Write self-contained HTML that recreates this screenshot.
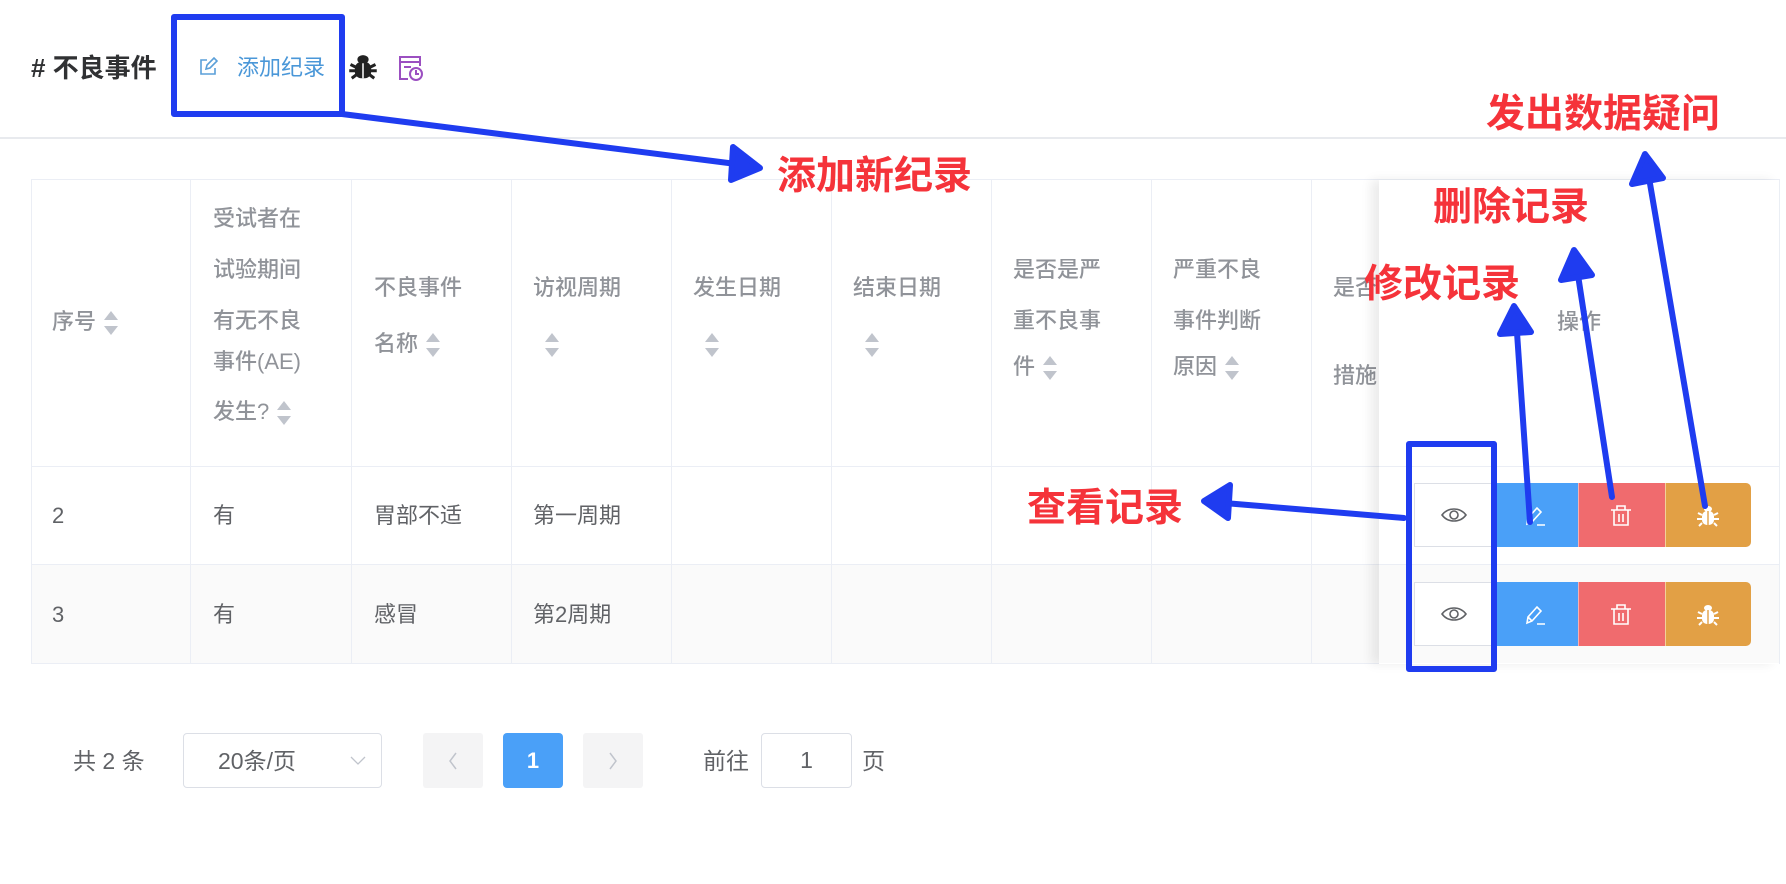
<!DOCTYPE html>
<html><head><meta charset="utf-8"><style>
*{margin:0;padding:0;box-sizing:border-box}
body{width:1786px;height:884px;background:#fff;position:relative;overflow:hidden;font-family:"Liberation Sans","Noto Sans CJK SC",sans-serif;color:#606266}
.a{position:absolute;white-space:nowrap}
.h{position:absolute;white-space:nowrap;font-size:22px;color:#909399;font-weight:500;line-height:26px;transform:translateY(-13px)}
.t{position:absolute;white-space:nowrap;font-size:22px;color:#606266;line-height:26px;transform:translateY(-13px)}
.c{display:inline-block;width:14px;height:26px;position:relative;vertical-align:middle;margin-left:8px}
.c:before{content:"";position:absolute;left:0;top:1px;border:7px solid transparent;border-bottom:9px solid #c0c4cc;border-top:0}
.c:after{content:"";position:absolute;left:0;bottom:1px;border:7px solid transparent;border-top:9px solid #c0c4cc;border-bottom:0}
.vl{position:absolute;width:1px;background:#ebeef5}
.hl{position:absolute;height:1px;background:#ebeef5}
.red{position:absolute;color:#f5333a;font-weight:bold;font-size:39px;white-space:nowrap;line-height:44px}
</style></head><body>
<div class="a" style="left:31px;top:52px;font-size:26px;font-weight:bold;color:#303133;line-height:32px"># 不良事件</div>
<svg class="a" style="left:198px;top:57px" width="20" height="20" viewBox="0 0 20 20"><path d="M9 3H3v14h14v-6M8 12l1-4 7-7 3 3-7 7z" fill="none" stroke="#5a9fd8" stroke-width="1.6"/></svg>
<div class="a" style="left:237px;top:54px;font-size:22px;color:#4a97d8;line-height:28px">添加纪录</div>
<svg class="a" style="left:348px;top:52px" width="30" height="30" viewBox="0 0 24 24"><ellipse cx="12" cy="6" rx="4.5" ry="3.5" fill="#222"/><rect x="5.5" y="8" width="13" height="13" rx="5" fill="#222"/><path d="M2 10l4 2M22 10l-4 2M1 15h5M23 15h-5M3 21l4-3M21 21l-4-3" stroke="#222" stroke-width="2.4"/><path d="M12 9v12" stroke="#fff" stroke-width="1.2"/></svg>
<svg class="a" style="left:397px;top:55px" width="28" height="27" viewBox="0 0 28 27"><path d="M11 24H3V2h20v9M3 7h20M7 12h7" fill="none" stroke="#9b4fc1" stroke-width="2"/><circle cx="19" cy="19" r="6" fill="none" stroke="#9b4fc1" stroke-width="2"/><path d="M19 15v4h3" fill="none" stroke="#9b4fc1" stroke-width="2"/></svg>
<div class="hl" style="left:0;top:137px;width:1786px;background:#e8eaee;height:2px"></div>

<div class="a" style="left:31px;top:179px;width:1749px;height:485px;border:1px solid #ebeef5"></div>
<div class="a" style="left:32px;top:565px;width:1347px;height:98px;background:#fafafa"></div>
<div class="hl" style="left:31px;top:466px;width:1749px"></div>
<div class="hl" style="left:31px;top:564px;width:1749px"></div>
<div class="vl" style="left:190px;top:180px;height:484px"></div>
<div class="vl" style="left:351px;top:180px;height:484px"></div>
<div class="vl" style="left:511px;top:180px;height:484px"></div>
<div class="vl" style="left:671px;top:180px;height:484px"></div>
<div class="vl" style="left:831px;top:180px;height:484px"></div>
<div class="vl" style="left:991px;top:180px;height:484px"></div>
<div class="vl" style="left:1151px;top:180px;height:484px"></div>
<div class="vl" style="left:1311px;top:180px;height:484px"></div>

<div class="h" style="left:52px;top:322px">序号<span class="c"></span></div>
<div class="h" style="left:213px;top:219px">受试者在</div>
<div class="h" style="left:213px;top:270px">试验期间</div>
<div class="h" style="left:213px;top:321px">有无不良</div>
<div class="h" style="left:213px;top:362px">事件(AE)</div>
<div class="h" style="left:213px;top:412px">发生?<span class="c"></span></div>
<div class="h" style="left:374px;top:288px">不良事件</div>
<div class="h" style="left:374px;top:344px">名称<span class="c"></span></div>
<div class="h" style="left:533px;top:288px">访视周期</div>
<div class="h" style="left:533px;top:344px"><span class="c" style="margin-left:12px"></span></div>
<div class="h" style="left:693px;top:288px">发生日期</div>
<div class="h" style="left:693px;top:344px"><span class="c" style="margin-left:12px"></span></div>
<div class="h" style="left:853px;top:288px">结束日期</div>
<div class="h" style="left:853px;top:344px"><span class="c" style="margin-left:12px"></span></div>
<div class="h" style="left:1013px;top:270px">是否是严</div>
<div class="h" style="left:1013px;top:321px">重不良事</div>
<div class="h" style="left:1013px;top:367px">件<span class="c"></span></div>
<div class="h" style="left:1173px;top:270px">严重不良</div>
<div class="h" style="left:1173px;top:321px">事件判断</div>
<div class="h" style="left:1173px;top:367px">原因<span class="c"></span></div>
<div class="h" style="left:1333px;top:288px">是否</div>
<div class="h" style="left:1333px;top:376px">措施</div>

<div class="t" style="left:52px;top:516px">2</div>
<div class="t" style="left:213px;top:516px">有</div>
<div class="t" style="left:374px;top:516px">胃部不适</div>
<div class="t" style="left:533px;top:516px">第一周期</div>
<div class="t" style="left:52px;top:615px">3</div>
<div class="t" style="left:213px;top:615px">有</div>
<div class="t" style="left:374px;top:615px">感冒</div>
<div class="t" style="left:533px;top:615px">第2周期</div>

<div class="a" style="left:1379px;top:180px;width:400px;height:484px;background:#fff;box-shadow:-8px 0 10px rgba(0,0,0,0.08)"></div>
<div class="a" style="left:1379px;top:565px;width:400px;height:98px;background:#fafafa"></div>
<div class="hl" style="left:1379px;top:466px;width:400px"></div>
<div class="hl" style="left:1379px;top:564px;width:400px"></div>
<div class="h" style="left:1557px;top:322px">操作</div>

<div class="a" style="left:1414px;top:483px;width:81px;height:64px;background:#fff;border:1px solid #dcdfe6"></div>
<div class="a" style="left:1495px;top:483px;width:83px;height:64px;background:#4aa0f8"></div>
<div class="a" style="left:1578px;top:483px;width:87px;height:64px;background:#f06b6e;border-left:1px solid #f9b0b0"></div>
<div class="a" style="left:1665px;top:483px;width:86px;height:64px;background:#e2a045;border-radius:0 5px 5px 0;border-left:1px solid #f3cf9a"></div>
<div class="a" style="left:1414px;top:582px;width:81px;height:64px;background:#fff;border:1px solid #dcdfe6"></div>
<div class="a" style="left:1495px;top:582px;width:83px;height:64px;background:#4aa0f8"></div>
<div class="a" style="left:1578px;top:582px;width:87px;height:64px;background:#f06b6e;border-left:1px solid #f9b0b0"></div>
<div class="a" style="left:1665px;top:582px;width:86px;height:64px;background:#e2a045;border-radius:0 5px 5px 0;border-left:1px solid #f3cf9a"></div>
<svg class="a" style="left:0;top:0" width="1786" height="884">
<defs>
<g id="eye"><path d="M-12 0C-6-8 6-8 12 0C6 8-6 8-12 0Z" fill="none" stroke="#606266" stroke-width="1.6"/><circle r="4" fill="none" stroke="#606266" stroke-width="1.6"/></g>
<g id="pen"><path d="M-6 9l1-6 9-10 4 4-9 10zM-5 3l4 4M4 10h8" fill="none" stroke="#fff" stroke-width="1.6"/></g>
<g id="trash"><path d="M-10-6h20M-4-6v-4h8v4M-7-6v15h14v-15M-2-2v8M2-2v8" fill="none" stroke="#fff" stroke-width="1.6"/></g>
<g id="bug"><ellipse cy="-7" rx="4" ry="3" fill="#fff"/><rect x="-6" y="-5" width="12" height="14" rx="5" fill="#fff"/><path d="M0-5v14" stroke="#e2a045" stroke-width="1.4"/><path d="M-10-3l4 2M10-3l-4 2M-11 3h5M11 3h-5M-9 10l3-3M9 10l-3-3" stroke="#fff" stroke-width="2"/></g>
</defs>
<use href="#eye" x="1454" y="515"/><use href="#eye" x="1454" y="614"/>
<use href="#pen" x="1533" y="515"/><use href="#pen" x="1533" y="614"/>
<use href="#trash" x="1621" y="516"/><use href="#trash" x="1621" y="615"/>
<use href="#bug" x="1708" y="516"/><use href="#bug" x="1708" y="615"/>
</svg>

<div class="t" style="left:73px;top:761px;font-size:23px">共 2 条</div>
<div class="a" style="left:183px;top:733px;width:199px;height:55px;border:1px solid #dcdfe6;border-radius:4px"></div>
<div class="t" style="left:218px;top:761px;font-size:23px">20条/页</div>
<svg class="a" style="left:350px;top:755px" width="16" height="12"><path d="M1 2l7 7 7-7" fill="none" stroke="#c0c4cc" stroke-width="1.3"/></svg>
<div class="a" style="left:423px;top:733px;width:60px;height:55px;background:#f4f4f5;border-radius:3px"></div>
<svg class="a" style="left:447px;top:751px" width="12" height="20"><path d="M9 2L3 10l6 8" fill="none" stroke="#c0c4cc" stroke-width="1.5"/></svg>
<div class="a" style="left:503px;top:733px;width:60px;height:55px;background:#4aa0f8;border-radius:4px;color:#fff;font-weight:bold;font-size:22px;text-align:center;line-height:55px">1</div>
<div class="a" style="left:583px;top:733px;width:60px;height:55px;background:#f4f4f5;border-radius:3px"></div>
<svg class="a" style="left:607px;top:751px" width="12" height="20"><path d="M3 2l6 8-6 8" fill="none" stroke="#c0c4cc" stroke-width="1.5"/></svg>
<div class="t" style="left:703px;top:761px;font-size:23px">前往</div>
<div class="a" style="left:761px;top:733px;width:91px;height:55px;border:1px solid #dcdfe6;border-radius:4px;text-align:center;line-height:53px;font-size:23px;color:#606266">1</div>
<div class="t" style="left:862px;top:761px;font-size:23px">页</div>

<div class="red" style="left:777px;top:155px">添加新纪录</div>
<div class="red" style="left:1486px;top:93px">发出数据疑问</div>
<div class="red" style="left:1433px;top:186px">删除记录</div>
<div class="red" style="left:1364px;top:263px">修改记录</div>
<div class="red" style="left:1027px;top:487px">查看记录</div>
<svg class="a" style="left:0;top:0" width="1786" height="884" fill="none" stroke="#1f3cf0" stroke-width="6" stroke-linecap="round" stroke-linejoin="round">
<rect x="174" y="17" width="168" height="97"/>
<path d="M342 114L752 166"/>
<path d="M733 147L760 168L731 180Z" fill="#1f3cf0"/>
<rect x="1409" y="444" width="85" height="225"/>
<path d="M1404 518L1212 502"/>
<path d="M1230 485L1204 501L1228 518Z" fill="#1f3cf0"/>
<path d="M1530 522L1516 318"/>
<path d="M1500 334L1514 306L1531 332Z" fill="#1f3cf0"/>
<path d="M1612 497L1576 262"/>
<path d="M1561 280L1574 250L1592 275Z" fill="#1f3cf0"/>
<path d="M1705 506L1647 166"/>
<path d="M1632 184L1645 154L1663 178Z" fill="#1f3cf0"/>
</svg>
</body></html>
